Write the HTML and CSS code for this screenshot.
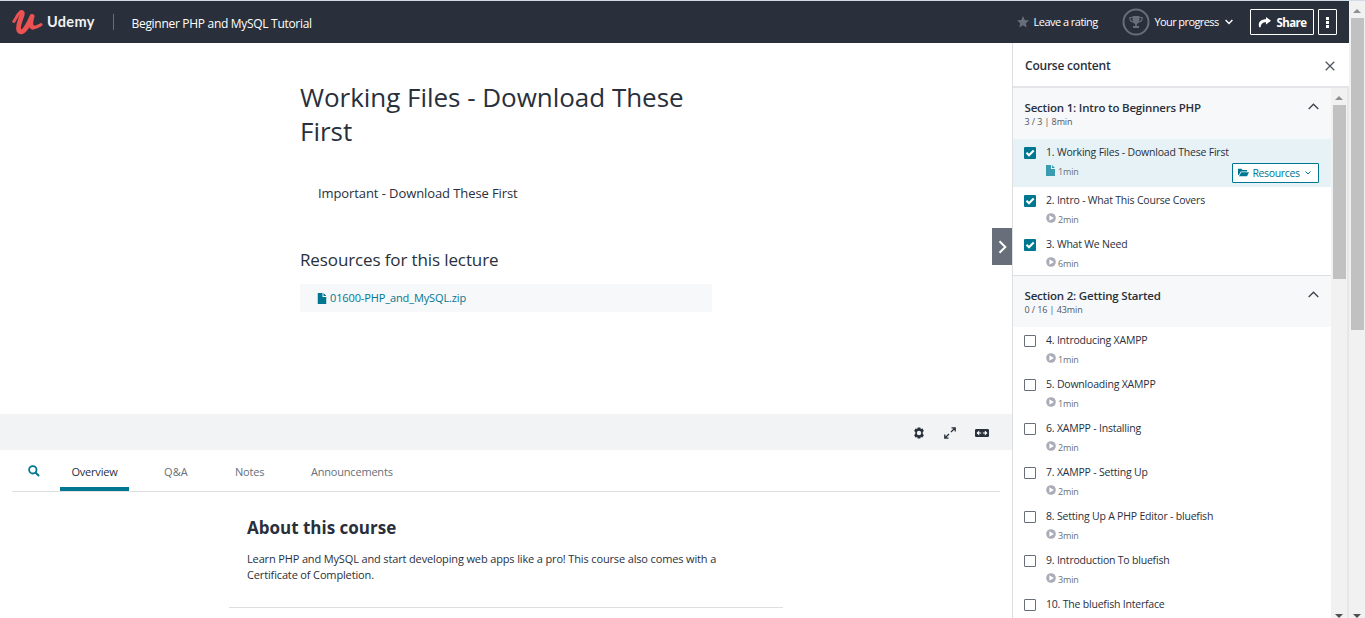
FILE: index.html
```html
<!DOCTYPE html>
<html lang="en">
<head>
<meta charset="utf-8">
<title>Beginner PHP and MySQL Tutorial | Udemy</title>
<link rel="stylesheet" href="styles.css">
</head>
<body>
<svg class="sprite" aria-hidden="true">
  <symbol id="play" viewBox="0 0 10 10"><circle cx="5" cy="5" r="4.8" fill="#a9abb6"/><path d="M3.400 2.200 8 5 3.400 7.800z" fill="#fff"/></symbol>
  <symbol id="file" viewBox="0 0 9 11"><path d="M0 0h5v4h4v7H0zM6 0l3 3H6z" fill="currentColor"/></symbol>
  <symbol id="tick" viewBox="0 0 12 12"><rect width="12" height="12" rx="1" fill="#007791"/><path d="M2.5 5.8 5 8.2 9.7 3.5" fill="none" stroke="#fff" stroke-width="2.1"/></symbol>
  <symbol id="up" viewBox="0 0 11 7"><path d="M.7 6 5.5 1.2 10.3 6" fill="none" stroke="#3c444c" stroke-width="1.3"/></symbol>
</svg>
<div class="page">
  <div class="app">
    <header class="topbar">
      <svg class="logo" viewBox="0 0 31 26"><g fill="none" stroke="#ec5252" stroke-linecap="round" stroke-linejoin="round"><path d="M1.800 12.500C4.500 9.500 5.500 4 9 3.200" stroke-width="3"/><path d="M9.300 3.400C11.500 3.800 9.500 7.500 8.300 11 6.500 16 5.300 22.700 8.800 22.800 13 22.900 17 14 20 7.500" stroke-width="4.800"/><path d="M20 7.500C19 11.500 17.800 18.200 21 18.400" stroke-width="4.600"/><path d="M21 18.600C24 18.900 26.500 16.800 29 15.600" stroke-width="3"/></g></svg>
      <span class="brand">Udemy</span>
      <span class="divider"></span>
      <span class="course t">Beginner PHP and MySQL Tutorial</span>
      <svg class="star" viewBox="0 0 12 12"><path d="M6 0 7.700 4 12 4.400 8.800 7.300 9.700 11.500 6 9.300 2.300 11.500 3.200 7.300 0 4.400 4.300 4z" fill="#686f7a"/></svg>
      <span class="rating t">Leave a rating</span>
      <svg class="trophy" viewBox="0 0 28 28"><circle cx="14" cy="14" r="12.500" fill="none" stroke="#686f7a" stroke-width="2"/><path d="M10.500 8h7v3c0 3-1.500 4.700-2.700 5.200V18h2.200v2h-6v-2h2.200v-1.800C12 15.700 10.500 14 10.500 11z" fill="#686f7a"/><path d="M10.500 9.500H7.800c0 3 1.400 4.500 4 4.700M17.500 9.500h2.700c0 3-1.400 4.500-4 4.700" fill="none" stroke="#686f7a" stroke-width="1.200"/></svg>
      <span class="progress t">Your progress</span>
      <svg class="caret" viewBox="0 0 8 6"><path d="M.6 1 4 4.400 7.400 1" fill="none" stroke="#fff" stroke-width="1.400"/></svg>
      <span class="btn share"><svg viewBox="0 0 13 11"><path d="M8 0l5 3.700-5 3.700V5.200C5 5.200 3 6.500 2.600 10.300H1.200C-.5 5 3 2.300 8 2.200z" fill="#fff"/></svg><span class="t">Share</span></span>
      <span class="btn more"><svg viewBox="0 0 3 11"><path d="M0 0h3v3H0zM0 4h3v3H0zM0 8h3v3H0z" fill="#fff"/></svg></span>
    </header>
    <div class="columns">
      <main class="main">
        <section class="lecture">
          <h1><span class="t">Working Files - Download These</span><br><span class="t">First</span></h1>
          <p class="note"><span class="t">Important - Download These First</span></p>
          <h2><span class="t">Resources for this lecture</span></h2>
          <a class="download"><svg viewBox="0 0 9 11"><use href="#file"/></svg><span class="t">01600-PHP_and_MySQL.zip</span></a>
          <button class="collapse"><svg viewBox="0 0 9 14"><path d="M1.500 1.300 7.300 7 1.500 12.700" fill="none" stroke="#fff" stroke-width="2"/></svg></button>
        </section>
        <div class="toolbar">
          <svg class="gear" viewBox="0 0 12 12"><path d="M4.700.5h2.600l.5 1.600 1.700-.5 1.400 2.300L9.700 5v2l1.200 1.100-1.400 2.300-1.700-.5-.5 1.600H4.700l-.5-1.600-1.700.5-1.400-2.300L2.300 7V5L1.100 3.900l1.400-2.300 1.700.5z" fill="#29303b"/><circle cx="6" cy="6" r="2.200" fill="#f2f3f5"/></svg>
          <svg class="expand" viewBox="0 0 12 12"><path d="M7 5 11 1M7.500.8h3.700v3.700M5 7 1 11M.8 7.500v3.700h3.700" fill="none" stroke="#29303b" stroke-width="1.300"/></svg>
          <svg class="wide" viewBox="0 0 14 8"><rect width="14" height="8" rx="1.200" fill="#29303b"/><path d="M1.500 4 4.200 1.500v1.900h2v1.200h-2v1.900zM12.500 4 9.800 1.500v1.900h-2v1.200h2v1.900z" fill="#fff"/></svg>
        </div>
        <nav class="tabs">
          <svg class="search" viewBox="0 0 12 12"><circle cx="4.800" cy="4.800" r="3.700" fill="none" stroke="#007791" stroke-width="1.800"/><path d="M7.500 7.500 11 11" stroke="#007791" stroke-width="2"/></svg>
          <span class="tab active"><span class="t">Overview</span></span>
          <span class="tab qa"><span class="t">Q&amp;A</span></span>
          <span class="tab notes"><span class="t">Notes</span></span>
          <span class="tab ann"><span class="t">Announcements</span></span>
        </nav>
        <section class="about">
          <h3><span class="t">About this course</span></h3>
          <p><span class="t">Learn PHP and MySQL and start developing web apps like a pro! This course also comes with a</span><br><span class="t">Certificate of Completion.</span></p>
        </section>
      </main>
      <aside class="side">
        <div class="side-head"><span class="t">Course content</span><svg viewBox="0 0 10 10"><path d="M.7.7l8.600 8.600M9.300.7.7 9.300" stroke="#505763" stroke-width="1.300"/></svg></div>
        <div class="side-body">
          <div class="list">
            <div class="section"><div><b>Section 1: Intro to Beginners PHP</b><small>3 / 3 | 8min</small></div><svg viewBox="0 0 11 7"><use href="#up"/></svg></div>
            <div class="item current"><svg class="box"><use href="#tick"/></svg><div><p>1. Working Files - Download These First</p><small><svg class="doc" viewBox="0 0 9 11"><use href="#file"/></svg>1min</small></div>
              <span class="resources"><svg class="folder" viewBox="0 0 11 9"><path d="M0 7V.8h3.500l1 1.200H9v1.500H2.800L.8 7zM3.200 4.300H11L9 8.300H1z" fill="currentColor"/></svg><span>Resources</span><svg class="down" viewBox="0 0 6 4"><path d="M.5.500 3 3 5.500.500" fill="none" stroke="currentColor"/></svg></span></div>
            <div class="item"><svg class="box"><use href="#tick"/></svg><div><p>2. Intro - What This Course Covers</p><small><svg><use href="#play"/></svg>2min</small></div></div>
            <div class="item"><svg class="box"><use href="#tick"/></svg><div><p>3. What We Need</p><small><svg><use href="#play"/></svg>6min</small></div></div>
            <div class="section second"><div><b>Section 2: Getting Started</b><small>0 / 16 | 43min</small></div><svg viewBox="0 0 11 7"><use href="#up"/></svg></div>
            <div class="item"><i class="box"></i><div><p>4. Introducing XAMPP</p><small><svg><use href="#play"/></svg>1min</small></div></div>
            <div class="item"><i class="box"></i><div><p>5. Downloading XAMPP</p><small><svg><use href="#play"/></svg>1min</small></div></div>
            <div class="item"><i class="box"></i><div><p>6. XAMPP - Installing</p><small><svg><use href="#play"/></svg>2min</small></div></div>
            <div class="item"><i class="box"></i><div><p>7. XAMPP - Setting Up</p><small><svg><use href="#play"/></svg>2min</small></div></div>
            <div class="item"><i class="box"></i><div><p>8. Setting Up A PHP Editor - bluefish</p><small><svg><use href="#play"/></svg>3min</small></div></div>
            <div class="item"><i class="box"></i><div><p>9. Introduction To bluefish</p><small><svg><use href="#play"/></svg>3min</small></div></div>
            <div class="item"><i class="box"></i><div><p>10. The bluefish Interface</p></div></div>
          </div>
          <div class="scroll inner"><i class="arrow-up"></i><i class="thumb"></i><i class="arrow-down"></i></div>
        </div>
      </aside>
    </div>
  </div>
  <div class="scroll outer"><i class="arrow-up"></i><i class="thumb"></i><i class="arrow-down"></i></div>
</div>
</body>
</html>
```
FILE: styles.css
```css
* { box-sizing: border-box; }
body { margin: 0; width: 1365px; height: 618px; overflow: hidden; background: #fff; color: #29303b; font-family: "Open Sans", "Noto Sans", sans-serif; font-size: 11px; }
h1, h2, h3, p { margin: 0; font-weight: 400; }
svg { display: block; flex: none; }
.sprite { width: 0; height: 0; position: absolute; }
.t, .item p, .item small, .section b, .section small { white-space: nowrap; }
.page { display: flex; height: 618px; border-top: 1px solid #d3dce6; }
.app { width: 1349px; display: flex; flex-direction: column; }

.topbar { height: 42px; flex: none; display: flex; align-items: center; background: #29303b; color: #fff; padding-left: 12px; }
.logo { width: 31px; height: 26px; }
.brand { width: 50px; margin-left: 4px; padding-bottom: 1px; font: 700 14.500px Lato, sans-serif; letter-spacing: .3px; color: #f2f3f5; }
.divider { width: 1px; height: 16px; margin-left: 16px; background: #686f7a; }
.course { margin-left: 17.500px; padding-top: 2px; width: 885px; font-size: 12px; letter-spacing: -.3px; }
.star { width: 12px; height: 12px; }
.rating { width: 88px; margin-left: 5px; padding-bottom: 1px; font-size: 11px; letter-spacing: -.52px; }
.trophy { width: 28px; height: 28px; }
.progress { margin-left: 5px; width: 70px; padding-bottom: 1px; letter-spacing: -.6px; }
.caret { width: 8px; height: 6px; }
.btn { border: 1px solid #fff; height: 26px; display: flex; align-items: center; justify-content: center; border-radius: 1px; }
.share { width: 64px; margin-left: 17.500px; gap: 6px; font-weight: 700; font-size: 11.500px; letter-spacing: -.6px; }
.share svg { width: 13px; height: 11px; }
.more { width: 19px; margin-left: 4px; }
.more svg { width: 3px; height: 11px; }

.columns { display: flex; height: 575px; }
.main { width: 1012px; }
.lecture { position: relative; height: 371px; padding: 37px 0 0 300px; }
h1 { font-size: 26px; line-height: 34px; letter-spacing: -.03px; }
.note { margin-top: 36px; padding-left: 18px; font-size: 13px; line-height: 18px; letter-spacing: -.09px; }
h2 { margin-top: 45px; font-size: 17px; line-height: 25px; letter-spacing: -.12px; }
.download { display: flex; align-items: center; gap: 3px; width: 412px; height: 28px; margin-top: 12px; padding-left: 17px; background: #f7f8fa; color: #007791; letter-spacing: -.12px; }
.download svg { width: 10px; height: 11px; }
.download .t { padding-bottom: 1px; }
.collapse { position: absolute; right: 0; top: 185px; width: 20px; height: 37px; padding: 0; border: 0; background: #686f7a; display: grid; place-items: center; }
.collapse svg { width: 9px; height: 14px; }
.toolbar { height: 36px; background: #f2f3f5; display: flex; align-items: center; padding: 2px 0 0 913px; }
.gear { width: 12px; height: 12px; }
.expand { width: 12px; height: 12px; margin-left: 19px; }
.wide { width: 14px; height: 8px; margin-left: 19px; }
.tabs { display: flex; align-items: center; height: 42px; margin: 0 12px; border-bottom: 1px solid #dedfe0; color: #686f7a; letter-spacing: -.2px; }
.search { width: 12px; height: 12px; margin: 0 20px 0 16px; }
.tab { height: 41px; line-height: 43px; }
.active { width: 69px; text-align: center; color: #29303b; border-bottom: 4px solid #007791; }
.qa { width: 71px; margin-left: 35px; letter-spacing: .1px; }
.notes { width: 76px; }
.about { width: 554px; height: 116px; margin-left: 229px; padding: 22px 0 0 18px; border-bottom: 1px solid #dedfe0; }
h3 { font-size: 17px; font-weight: 700; line-height: 28px; }
.about p { margin-top: 9px; line-height: 16px; font-size: 11px; letter-spacing: -.145px; }

.side { width: 337px; border-left: 1px solid #dedfe0; display: flex; flex-direction: column; }
.side-head { height: 45px; flex: none; border-bottom: 2px solid #e3e5e8; padding: 2px 14px 0 12px; display: flex; align-items: center; justify-content: space-between; font-weight: 600; font-size: 12px; letter-spacing: -.22px; }
.side-head svg { width: 10px; height: 10px; }
.side-body { display: flex; height: 530px; overflow: hidden; }
.list { width: 318px; }
.section { height: 51px; background: #f7f8fa; display: flex; justify-content: space-between; padding: 12px 12px 0 11.500px; }
.section.second { height: 52px; border-top: 1px solid #dedfe0; }
.section b { display: block; font-size: 11.500px; line-height: 15px; font-weight: 600; letter-spacing: -.19px; }
.section small { display: block; font-size: 9px; line-height: 13px; color: #505763; letter-spacing: -.1px; }
.section svg { width: 11px; height: 7px; margin-top: 3px; }
.item { position: relative; height: 44px; display: flex; gap: 10px; padding: 5px 0 0 11px; }
.item.current { height: 48px; background: #e6f2f5; }
.item p { font-size: 10.500px; line-height: 16px; letter-spacing: -.2px; }
.item small { display: flex; align-items: center; gap: 2px; height: 14px; margin-top: 4px; font-size: 9px; color: #686f7a; letter-spacing: -.15px; }
.item small svg { width: 10px; height: 10px; margin-top: -2px; }
.item small .doc { width: 9px; height: 11px; margin-right: 1px; color: #3a9cae; }
.item .box { width: 12px; height: 12px; margin-top: 3px; flex: none; }
i.box { border: 1px solid #686f7a; border-radius: 1px; background: #fff; }
.resources { position: absolute; right: 12px; bottom: 4px; width: 87px; height: 20px; border: 1px solid #007791; border-radius: 1px; background: #fff; color: #007791; display: flex; align-items: center; justify-content: center; gap: 3px; font-size: 10.500px; letter-spacing: -.35px; padding: 0 2px 1px 0; }
.folder { width: 11px; height: 9px; }
.down { width: 6px; height: 4px; margin-left: 2px; }
.scroll { background: #f1f1f1; display: flex; flex-direction: column; align-items: center; }
.outer { width: 16px; }
.inner { width: 18px; border-right: 2px solid #e6e7e9; }
.arrow-up, .arrow-down { border: 4px solid transparent; width: 0; height: 0; }
.arrow-up { border-top: 0; border-bottom-color: #8f8f8f; margin-top: 8px; }
.arrow-down { border-bottom: 0; border-top-color: #505050; margin-top: auto; }
.thumb { width: 13px; background: #c1c1c1; margin-top: 5px; }
.outer .thumb { height: 312px; }
.inner .thumb { height: 174px; }
```
